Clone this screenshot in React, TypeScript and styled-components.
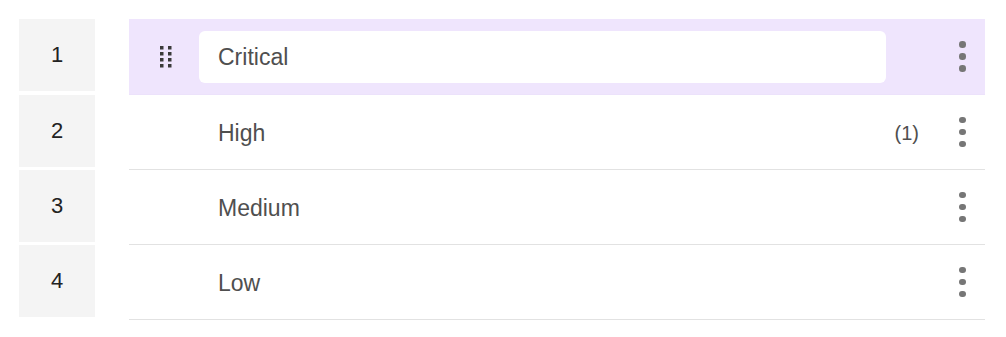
import { Fragment } from "react";
import styled, { createGlobalStyle } from "styled-components";

const GlobalStyle = createGlobalStyle`
  body {
    margin: 0;
    background: #ffffff;
    font-family: "Liberation Sans", Arial, sans-serif;
  }
`;

const Board = styled.div`
  display: grid;
  grid-template-columns: 76px 856px;
  column-gap: 34px;
  padding: 19px 0 0 19px;
`;

const NumberCell = styled.div`
  height: 72px;
  background: #f4f4f4;
  display: flex;
  align-items: center;
  justify-content: center;
  font-size: 22px;
  color: #222222;
`;

const Item = styled.div<{ selected?: boolean; height: number }>`
  height: ${({ height }) => `${height}px`};
  box-sizing: border-box;
  display: flex;
  align-items: center;
  background: ${({ selected }) => (selected ? "#efe5fd" : "#ffffff")};
  border-bottom: 1px solid
    ${({ selected }) => (selected ? "#ece2fb" : "#e2e2e2")};
`;

const HandleSlot = styled.div`
  width: 70px;
  flex-shrink: 0;
  display: flex;
  align-items: center;
  padding-left: 31px;
  box-sizing: border-box;
`;

const NameInput = styled.div`
  flex: 1;
  height: 52px;
  margin-right: 54px;
  background: #ffffff;
  border-radius: 6px;
  display: flex;
  align-items: center;
  padding: 2px 0 0 19px;
  box-sizing: border-box;
  font-size: 23px;
  color: #4f4f4f;
`;

const Label = styled.div`
  flex: 1;
  padding: 2px 0 0 19px;
  font-size: 23px;
  color: #4f4f4f;
`;

const Count = styled.span`
  font-size: 20px;
  color: #4f4f4f;
  margin-right: 21px;
  padding-top: 2px;
`;

const KebabSlot = styled.button`
  width: 45px;
  height: 40px;
  flex-shrink: 0;
  border: none;
  background: transparent;
  padding: 0;
  display: flex;
  flex-direction: column;
  align-items: center;
  justify-content: center;
  gap: 5.5px;
  cursor: pointer;
`;

const Dot = styled.span`
  width: 6.5px;
  height: 6.5px;
  border-radius: 50%;
  background: #767676;
`;

const DragHandle = () => (
  <svg width="12" height="22" viewBox="0 0 12 22">
    {[0, 6, 12, 18].map((y) =>
      [0, 8].map((x) => (
        <rect key={`${x}-${y}`} x={x} y={y} width="3.5" height="3.5" fill="#3a3a3a" />
      ))
    )}
  </svg>
);

const Kebab = () => (
  <KebabSlot aria-label="More">
    <Dot />
    <Dot />
    <Dot />
  </KebabSlot>
);

const levels = [
  { id: 1, name: "Critical", count: 0 },
  { id: 2, name: "High", count: 1 },
  { id: 3, name: "Medium", count: 0 },
  { id: 4, name: "Low", count: 0 },
];

export default function App() {
  const editing = 1;

  return (
    <>
      <GlobalStyle />
      <Board>
        {levels.map((level, idx) => (
          <Fragment key={level.id}>
            <NumberCell>{idx + 1}</NumberCell>
            <Item
              selected={level.id === editing}
              height={level.id === editing ? 76 : 75}
            >
              <HandleSlot>{level.id === editing && <DragHandle />}</HandleSlot>
              {level.id === editing ? (
                <NameInput>{level.name}</NameInput>
              ) : (
                <Label>{level.name}</Label>
              )}
              {level.count > 0 && <Count>({level.count})</Count>}
              <Kebab />
            </Item>
          </Fragment>
        ))}
      </Board>
    </>
  );
}
